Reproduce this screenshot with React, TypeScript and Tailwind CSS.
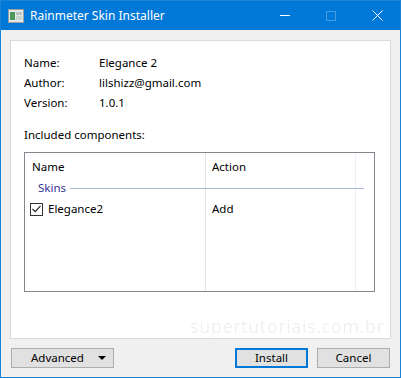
import React from "react";

const font = { fontFamily: '"Segoe UI", "Noto Sans", sans-serif' };

function Btn({ children, focused }: { children: React.ReactNode; focused?: boolean }) {
  return (
    <button
      className={
        "flex h-[20px] items-center justify-center bg-[#e1e1e1] text-[11.5px] text-black " +
        (focused ? "border-2 border-[#0078d7]" : "border border-[#adadad]")
      }
    >
      {children}
    </button>
  );
}

export default function App() {
  return (
    <div
      className="relative flex h-[378px] w-[401px] flex-col overflow-hidden border border-[#1883d7] bg-[#f0f0f0] text-[11.5px] text-black"
      style={font}
    >
      {/* title bar */}
      <div className="flex h-[29px] shrink-0 items-center bg-[#0078d7] text-white">
        <svg width="16" height="14" viewBox="0 0 16 14" className="ml-[7px]">
          <rect x="0.5" y="0.5" width="15" height="13" fill="#e6e6e6" stroke="#9aa0a0" />
          <rect x="2" y="3" width="5" height="8" fill="#4e9a5a" />
          <rect x="8" y="3" width="6" height="3" fill="#b8c4c0" />
          <rect x="8" y="7" width="6" height="4" fill="#c9d6cf" />
        </svg>
        <span className="ml-[6px] text-[12px]">Rainmeter Skin Installer</span>
        <div className="ml-auto flex h-full">
          <div className="flex w-[46px] items-center justify-center">
            <div className="h-px w-[10px] bg-white" />
          </div>
          <div className="flex w-[46px] items-center justify-center">
            <div className="h-[10px] w-[10px] border border-[#4a9be0]" />
          </div>
          <div className="flex w-[46px] items-center justify-center">
            <svg width="11" height="11" viewBox="0 0 11 11">
              <path d="M0.5 0.5 L10.5 10.5 M10.5 0.5 L0.5 10.5" stroke="white" strokeWidth="1" />
            </svg>
          </div>
        </div>
      </div>

      {/* content panel */}
      <div className="mx-[9px] mt-[10px] flex h-[299px] flex-col border border-[#dadada] bg-white px-[13px] pt-[14px]">
        <div className="grid grid-cols-[75px_1fr] gap-y-[4px] leading-[16px]">
          <span>Name:</span>
          <span>Elegance 2</span>
          <span>Author:</span>
          <span>lilshizz@gmail.com</span>
          <span>Version:</span>
          <span>1.0.1</span>
        </div>
        <div className="mt-[16px] leading-[16px]">Included components:</div>

        <div className="mt-[9px] flex h-[140px] w-[351px] flex-col border border-[#828790]">
          <div className="relative flex h-full">
            <div className="flex w-[181px] flex-col border-r border-[#e5e5e5]">
              <div className="h-[25px] pl-[7px] pt-[5px]">Name</div>
            </div>
            <div className="flex w-[150px] flex-col border-r border-[#eaf0f8]">
              <div className="h-[25px] pl-[6px] pt-[5px]">Action</div>
            </div>
            {/* rows overlaid across columns */}
            <div className="absolute left-0 top-[25px] w-[339px]">
              <div className="flex h-[20px] items-center">
                <span className="ml-[13px] text-[#343496]">Skins</span>
                <div className="ml-[4px] h-px flex-1 bg-[#a9b9d6]" />
              </div>
              <div className="flex h-[22px] items-center">
                <div className="ml-[5px] flex h-[13px] w-[13px] items-center justify-center border border-[#333]">
                  <svg width="9" height="8" viewBox="0 0 9 8">
                    <path d="M0.5 4 L3.2 6.7 L8.5 0.8" stroke="#222" strokeWidth="1.1" fill="none" />
                  </svg>
                </div>
                <span className="ml-[5px] w-[158px]">Elegance2</span>
                <span className="ml-[6px]">Add</span>
              </div>
            </div>
          </div>
        </div>
      </div>

      {/* bottom buttons */}
      <div className="mt-[9px] flex items-center px-[10px]">
        <Btn>
          <div className="flex w-[101px] items-center">
            <span className="ml-[19px]">Advanced</span>
            <svg width="8" height="4" viewBox="0 0 8 4" className="ml-auto mr-[7px]">
              <path d="M0 0 L8 0 L4 4 Z" fill="#000" />
            </svg>
          </div>
        </Btn>
        <div className="ml-auto flex gap-[9px]">
          <div className="w-[73px]">
            <Btn focused>
              <span className="w-[69px] text-center">Install</span>
            </Btn>
          </div>
          <div className="w-[73px]">
            <Btn>
              <span className="w-[71px] text-center">Cancel</span>
            </Btn>
          </div>
        </div>
      </div>

      {/* watermark */}
      <div
        className="pointer-events-none absolute left-[189px] top-[312px] text-[18px] tracking-[0.6px] text-[#000]/[0.08]"
        style={{ fontFamily: '"Open Sans", sans-serif' }}
      >
        supertutoriais.com.br
      </div>
    </div>
  );
}
